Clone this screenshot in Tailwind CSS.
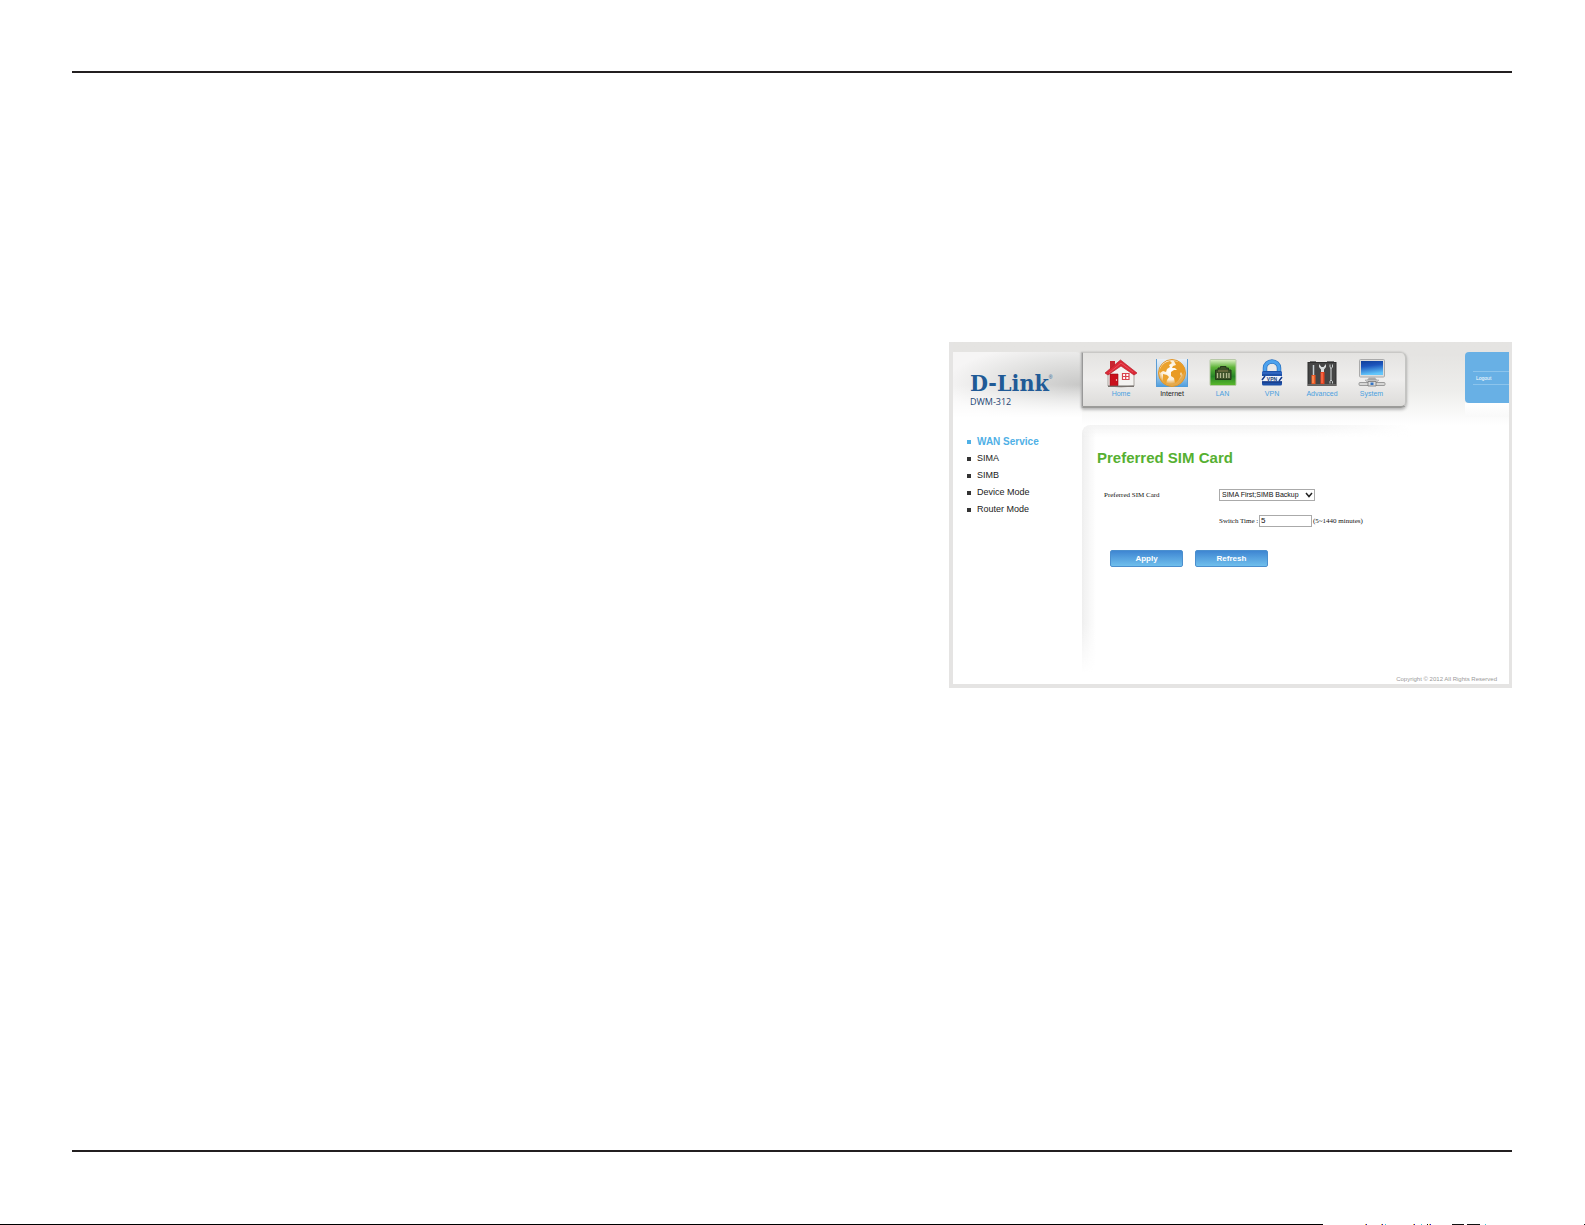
<!DOCTYPE html>
<html lang="en">
  <head>
    <meta charset="UTF-8" />
    <meta name="viewport" content="width=device-width, initial-scale=1.0" />
    <title>D-Link DWM-312 - Preferred SIM Card</title>
    <script src="https://cdn.jsdelivr.net/npm/@tailwindcss/browser@4"></script>
  </head>
  <body class="flex min-h-screen flex-col bg-white font-['Liberation_Sans',Arial,sans-serif]">
    <div class="flex flex-1 flex-col pt-[71px] pr-[73px] pl-[72px]">
      <main class="flex flex-1 flex-col items-end border-y-2 border-[#231f20] pt-[269px]">
        <!-- Router admin panel -->
        <section class="w-[39%] min-w-[563px] border-r-[3px] border-b-4 border-l-4 border-[#e5e4e3]">
          <!-- Header -->
          <header class="flex bg-linear-to-b from-[#e5e4e2] from-15% via-[#eeeeec] via-60% to-white pt-[10px]">
            <div class="flex h-[73px] w-[129px] flex-col rounded-tr-md bg-[linear-gradient(to_bottom,transparent_45%,white_90%),radial-gradient(ellipse_at_100%_45%,#c8c8c7_0%,#e0e0df_40%,#f6f5f5_75%)]">
              <div class="flex pt-[17px] pl-[17px] text-[#205a96]">
                <span class="font-['DejaVu_Serif_Condensed','DejaVu_Serif',serif] text-[23px] leading-7 font-bold">D-Link</span>
                <span class="pt-1 text-[5px] leading-2">®</span>
              </div>
              <span class="pl-[17px] font-['Open_Sans',sans-serif] text-[9px] leading-[10px] font-medium text-[#1d4573]">DWM-312</span>
            </div>

            <nav class="flex h-[56px] w-[325px] rounded-r-md border-t border-r-2 border-b-2 border-l border-t-[#c9c8c6] border-r-[#c4c4c2] border-b-[#9b9b99] border-l-[#999] bg-linear-to-b from-[#e4e3e1] via-[#efeeed] to-[#dddcda] pt-[6px] pl-[13px] text-center text-[7px] leading-2 text-[#4a9fe0] shadow-[0_2px_3px_#bbb,-1px_0_2px_#aaa]">
              <a href="#home" class="flex w-[50px] flex-col items-center gap-px">
                <svg class="h-[30px] w-[34px]" viewBox="0 0 34 30">
                  <path d="M4 15 17 4 30 15V27Q17 29 4 27Z" fill="#f4f3f1" stroke="#aaa49f" />
                  <path d="M4 26.500H30V28H4Z" fill="#77726e" />
                  <path d="M6 2H11V8L6 12Z" fill="#c72630" />
                  <path d="M1 14 16.500 1 33 14 30 16 17 7 4 16Z" fill="#dc2936" stroke="#b71f2b" stroke-width=".7" />
                  <path d="M5 14 17 4 29 13" fill="none" stroke="#ee6974" stroke-width=".6" />
                  <path d="M6 15H14V26.500H6Z" fill="#ca111d" stroke="#961019" stroke-width=".6" />
                  <circle cx="12.500" cy="21" r=".7" fill="#fff" />
                  <path d="M18.500 14.500H25V20.500H18.500ZM21.700 14V21M18 17.500H25.500" fill="#fff" stroke="#d9424d" stroke-width="1.200" />
                </svg>
                Home
              </a>
              <a href="#internet" class="flex w-[52px] flex-col items-center gap-px text-[#222]">
                <svg class="h-[30px] w-[34px]" viewBox="0 0 34 30">
                  <defs>
                    <linearGradient id="sky" x2="0" y2="1">
                      <stop stop-color="#e9eff5" />
                      <stop offset=".5" stop-color="#b4d4ee" />
                      <stop offset="1" stop-color="#4b9bdc" />
                    </linearGradient>
                    <radialGradient id="globe" cx=".45" cy=".4">
                      <stop stop-color="#ffffff" />
                      <stop offset=".7" stop-color="#fbeed8" />
                      <stop offset="1" stop-color="#e5a94c" />
                    </radialGradient>
                  </defs>
                  <path d="M1 0H33V28H1Z" fill="url(#sky)" />
                  <path d="M1.500 0V28M32.500 0V28" stroke="#5b9dd5" />
                  <circle cx="17" cy="14" r="13.500" fill="url(#globe)" stroke="#e0962b" />
                  <path d="M6 8Q9 3 15 2L17 4 14 6 15 8 12 10 11 13 8 12 5 14 4 12Z" fill="#eba22d" />
                  <path d="M8 15 12 16 14 18 12 21 11 25 8 22Z" fill="#eba22d" />
                  <path d="M19 2 24 3Q29 6 30 12L28 16 26 13 25 15 26 17 23 22 20 24 19 19 16 17 16 13 19 11 22 11 20 9 17 9 18 7 21 6Z" fill="#e99b24" />
                </svg>
                Internet
              </a>
              <a href="#lan" class="flex w-[49px] flex-col items-center gap-px">
                <svg class="h-[30px] w-[34px]" viewBox="0 0 34 30">
                  <defs>
                    <linearGradient id="lan" x2="0" y2="1">
                      <stop stop-color="#dff3c8" />
                      <stop offset=".3" stop-color="#5fb439" />
                      <stop offset=".65" stop-color="#268526" />
                      <stop offset="1" stop-color="#5cba2c" />
                    </linearGradient>
                  </defs>
                  <rect x="4" y=".5" width="26" height="26" rx="1" fill="url(#lan)" stroke="#b8c9a8" />
                  <path d="M9.500 20.500V11H12V9H14.500V7.500H20V9H22.500V11H25V20.500Z" fill="#3d5128" stroke="#233c18" />
                  <path d="M11.500 19V14M14.500 19V14M17.500 19V14M20.500 19V14M23 19V14" stroke="#b5ba91" stroke-width="1.300" />
                  <path d="M12 12H22" stroke="#716f40" stroke-width="1.500" />
                </svg>
                LAN
              </a>
              <a href="#vpn" class="flex w-[50px] flex-col items-center gap-px">
                <svg class="h-[30px] w-[34px]" viewBox="0 0 34 30">
                  <path d="M10 14V9A7 6.500 0 0 1 24 9V14" fill="none" stroke="#2d75c2" stroke-width="4.500" />
                  <path d="M10 14V9A7 6.500 0 0 1 24 9V14" fill="none" stroke="#4ca2ee" stroke-width="3" />
                  <rect x="7" y="12" width="20" height="14.500" rx="1.500" fill="#1d50a8" />
                  <path d="M7 13H27V15H7Z" fill="#2e65c0" />
                  <path d="M7 17H27V22.500H7Z" fill="#eef2fa" />
                  <path d="M7 21 10 17M24 22 27 18M7 23H27" stroke="#173c8a" stroke-width="1.500" />
                  <text x="17" y="22" text-anchor="middle" font-size="5" font-weight="bold" fill="#223d75">VPN</text>
                </svg>
                VPN
              </a>
              <a href="#advanced" class="flex w-[50px] flex-col items-center gap-px">
                <svg class="h-[30px] w-[34px]" viewBox="0 0 34 30">
                  <path d="M5 2.500H11M22 2.500H29" stroke="#777" />
                  <rect x="3" y="3.500" width="28" height="23" fill="#454545" stroke="#2e2e2e" />
                  <path d="M3 26H31" stroke="#96928f" />
                  <path d="M8.500 6V16" stroke="#c6cfd2" stroke-width="1.500" />
                  <path d="M6.500 16H10.500V25H6.500Z" fill="#f25a24" />
                  <path d="M8 17V24" stroke="#ffb274" />
                  <path d="M14 5V8L16 10.500V14H19V10.500L21 8V5L18.500 8H16.500Z" fill="#dadddd" />
                  <path d="M15.500 13H19.500V25H15.500Z" fill="#e74321" />
                  <path d="M17 14V24" stroke="#ff8360" />
                  <path d="M26 9V22" stroke="#b8bcbc" stroke-width="1.300" />
                  <path d="M25 5.500V8L26 9.500 27.500 8V5.500M25 24.500V22.500L26 21 27.500 22.500V24.500" fill="none" stroke="#c9cece" />
                </svg>
                Advanced
              </a>
              <a href="#system" class="flex w-[49px] flex-col items-center gap-px">
                <svg class="h-[30px] w-[34px]" viewBox="0 0 34 30">
                  <defs>
                    <linearGradient id="screen" x2=".2" y2="1">
                      <stop stop-color="#113f99" />
                      <stop offset=".4" stop-color="#1c55bd" />
                      <stop offset="1" stop-color="#63c6fa" />
                    </linearGradient>
                  </defs>
                  <rect x="4.500" y=".5" width="25" height="17.500" rx="1" fill="#dddddc" stroke="#aaa" />
                  <rect x="6" y="2" width="22" height="14" fill="url(#screen)" />
                  <path d="M14 18.500H20L22 21H12Z" fill="#aaa" />
                  <path d="M10 21H24L22 23H12Z" fill="#d0d0cf" stroke="#999" stroke-width=".5" />
                  <rect x="4" y="23.500" width="26" height="3" rx="1" fill="#d6d6d5" stroke="#888" stroke-width=".8" />
                  <path d="M13 22.500H21V27H13Z" fill="#ddd" stroke="#777" stroke-width=".8" />
                  <path d="M15.500 23.500H18.500V26H15.500Z" fill="#3475c5" />
                </svg>
                System
              </a>
            </nav>

            <div class="ml-auto w-11">
              <a href="#logout" class="flex h-[51px] flex-col justify-center rounded-l bg-[#68b0e5] pt-px pl-2 text-[5px] text-white">
                <span class="border-y border-[#8cc4ec] py-[2px] pl-[3px] leading-2">Logout</span>
              </a>
              <div class="h-[14px] bg-linear-to-b from-white to-[#f9f9f9]"></div>
            </div>
          </header>

          <div class="flex">
            <!-- Side menu -->
            <ul class="w-[129px] shrink-0 pt-2 pl-[14px] text-[9px] leading-[17px] text-[#222]">
              <li class="flex items-center gap-[6px]">
                <span class="size-1 bg-[#4fb0e6]"></span>
                <a href="#wan" class="text-[10px] font-bold text-[#4fb0e6]">WAN Service</a>
              </li>
              <li class="flex items-center gap-[6px]">
                <span class="size-1 bg-[#333]"></span>
                <a href="#sima">SIMA</a>
              </li>
              <li class="flex items-center gap-[6px]">
                <span class="size-1 bg-[#333]"></span>
                <a href="#simb">SIMB</a>
              </li>
              <li class="flex items-center gap-[6px]">
                <span class="size-1 bg-[#333]"></span>
                <a href="#device">Device Mode</a>
              </li>
              <li class="flex items-center gap-[6px]">
                <span class="size-1 bg-[#333]"></span>
                <a href="#router">Router Mode</a>
              </li>
            </ul>

            <!-- Settings form -->
            <div class="relative flex h-[259px] flex-1 flex-col">
              <div class="pointer-events-none absolute top-0 left-0 h-[248px] w-[14px] rounded-tl-lg bg-linear-to-r from-[#efefef] to-transparent [mask-image:linear-gradient(black_80%,transparent)]"></div>
              <div class="pointer-events-none absolute top-0 left-0 h-3 w-[330px] rounded-tl-lg bg-linear-to-b from-[#f3f3f3] to-transparent [mask-image:linear-gradient(to_right,black_70%,transparent)]"></div>

              <h1 class="pt-[23px] pl-[15px] text-[15px] leading-5 font-bold text-[#56b031]">Preferred SIM Card</h1>
              <form class="pt-[21px] pl-[22px] font-['Liberation_Serif',serif] text-[7px] leading-3 text-[#111]">
                <div class="flex items-center">
                  <label for="sim" class="w-[115px]">Preferred SIM Card</label>
                  <div class="relative w-24">
                    <select id="sim" class="block h-3 w-full appearance-none border border-[#aaa] bg-white pl-[2px] font-['Liberation_Sans',sans-serif] text-[7px] leading-[10px] text-[#111]">
                      <option>SIMA First;SIMB Backup</option>
                    </select>
                    <svg class="pointer-events-none absolute top-[3px] right-[2px] h-[6px] w-2" viewBox="0 0 8 6">
                      <path d="M1 1 4 4.500 7 1" fill="none" stroke="#222" stroke-width="1.500" />
                    </svg>
                  </div>
                </div>
                <div class="flex items-center pt-[14px] pl-[115px]">
                  <label for="time" class="w-10">Switch Time :</label>
                  <input id="time" type="text" value="5" class="h-3 w-[53px] border border-[#aaa] px-px font-['Liberation_Sans',sans-serif] text-[8px] text-[#111]" />
                  <span class="pl-px">(5~1440 minutes)</span>
                </div>
                <div class="flex gap-3 pt-[23px] pl-[6px] font-['Liberation_Sans',sans-serif]">
                  <button type="submit" class="h-[17px] w-[73px] rounded-xs border border-[#4b8fce] bg-linear-to-b from-[#3f86d2] to-[#70bfec] text-[8px] leading-3 font-bold text-white">Apply</button>
                  <button type="button" class="h-[17px] w-[73px] rounded-xs border border-[#4b8fce] bg-linear-to-b from-[#3f86d2] to-[#70bfec] text-[8px] leading-3 font-bold text-white">Refresh</button>
                </div>
              </form>
              <footer class="mt-auto pr-3 pb-[1px] text-right text-[6px] leading-2 text-[#999]">Copyright © 2012 All Rights Reserved</footer>
            </div>
          </div>
        </section>
      </main>
    </div>

    <!-- Page edge -->
    <div class="mt-[72px] flex h-px">
      <div class="flex-1 bg-black"></div>
      <svg class="h-px w-[262px]" viewBox="0 0 262 1" shape-rendering="crispEdges">
        <path d="M42 0h1v1h-1zM58 0h1v1h-1zM90 0h1v1h-1zM106 0h1v1h-1z" fill="#e8b020" />
        <path d="M43 0h1v1h-1zM59 0h1v1h-1zM91 0h1v1h-1zM107 0h1v1h-1z" fill="#2020c0" />
        <path d="M62 0h1v1h-1zM98 0h1v1h-1zM162 0h1v1h-1z" fill="#40c8d8" />
        <path d="M104 0h1v1h-1zM129 0h12v1h-12zM144 0h13v1h-13zM261 0h1v1h-1z" fill="#111" />
      </svg>
    </div>
  </body>
</html>
